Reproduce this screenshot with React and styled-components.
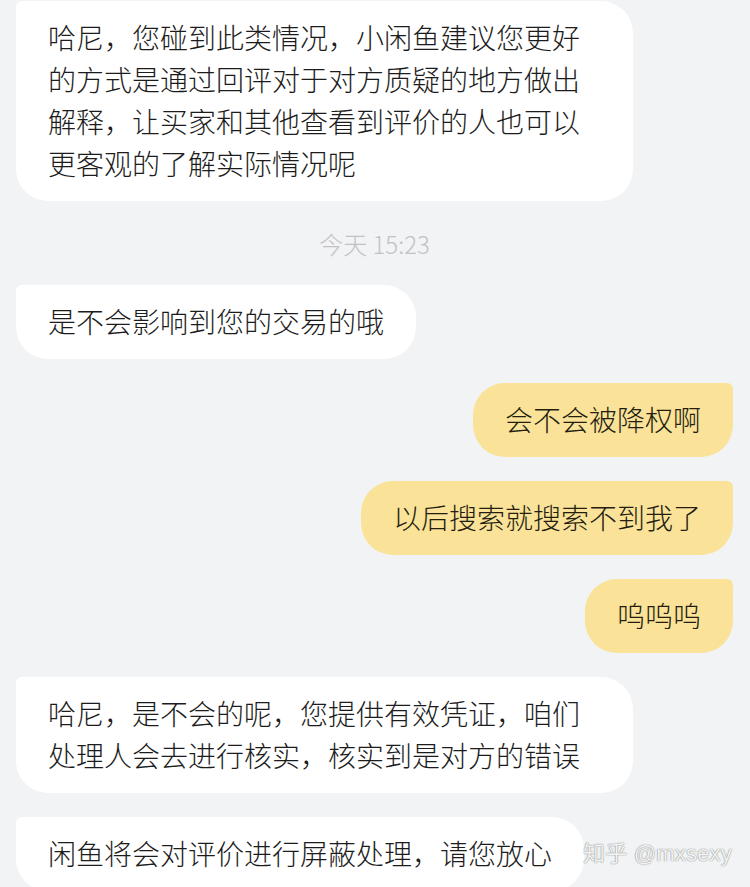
import React from "react";
import styled, { createGlobalStyle } from "styled-components";

const GlobalStyle = createGlobalStyle`
  html, body {
    margin: 0;
    padding: 0;
    background: #f2f3f5;
  }
  body {
    font-family: "Noto Sans CJK SC", "Noto Sans", sans-serif;
    -webkit-font-smoothing: antialiased;
  }
`;

const Screen = styled.div`
  position: relative;
  width: 750px;
  height: 887px;
  overflow: hidden;
  background: #f2f3f5;
`;

const Thread = styled.div`
  display: flex;
  flex-direction: column;
  gap: 24px;
  padding: 1px 17px 0 16px;
`;

const Row = styled.div`
  display: flex;
  justify-content: ${(p) => (p.$mine ? "flex-end" : "flex-start")};
`;

const Bubble = styled.div`
  box-sizing: border-box;
  max-width: 617px;
  padding: 15px 32px 17px;
  font-size: 28px;
  font-weight: 300;
  line-height: 42px;
  letter-spacing: 0;
  color: ${(p) => (p.$mine ? "#241d10" : "#1c1c1c")};
  background: ${(p) => (p.$mine ? "#fae399" : "#ffffff")};
  border-radius: ${(p) => (p.$mine ? "32px 6px 32px 32px" : "6px 32px 32px 32px")};
  word-break: break-all;
`;

const Stamp = styled.div`
  height: 36px;
  display: flex;
  align-items: center;
  justify-content: center;
  font-family: "Noto Sans CJK SC", sans-serif;
  font-size: 24px;
  font-weight: 300;
  color: #c2c2c2;
`;

const Watermark = styled.div`
  position: absolute;
  right: 18px;
  bottom: 20px;
  font-family: "Liberation Sans", "Noto Sans CJK SC", sans-serif;
  font-size: 22px;
  color: rgba(255, 255, 255, 0.92);
  text-shadow: 0 0 1px rgba(0, 0, 0, 0.5), 0 0 2px rgba(0, 0, 0, 0.2);
  letter-spacing: 0.2px;
`;

const messages = [
  { mine: false, text: "哈尼，您碰到此类情况，小闲鱼建议您更好的方式是通过回评对于对方质疑的地方做出解释，让买家和其他查看到评价的人也可以更客观的了解实际情况呢" },
  { stamp: "今天 15:23" },
  { mine: false, text: "是不会影响到您的交易的哦" },
  { mine: true, text: "会不会被降权啊" },
  { mine: true, text: "以后搜索就搜索不到我了" },
  { mine: true, text: "呜呜呜" },
  { mine: false, text: "哈尼，是不会的呢，您提供有效凭证，咱们处理人会去进行核实，核实到是对方的错误" },
  { mine: false, text: "闲鱼将会对评价进行屏蔽处理，请您放心" },
];

export default function App() {
  return (
    <Screen>
      <GlobalStyle />
      <Thread>
        {messages.map((m, i) =>
          m.stamp ? (
            <Stamp key={i}>{m.stamp}</Stamp>
          ) : (
            <Row key={i} $mine={m.mine}>
              <Bubble $mine={m.mine}>{m.text}</Bubble>
            </Row>
          )
        )}
      </Thread>
      <Watermark>知乎 @mxsexy</Watermark>
    </Screen>
  );
}
